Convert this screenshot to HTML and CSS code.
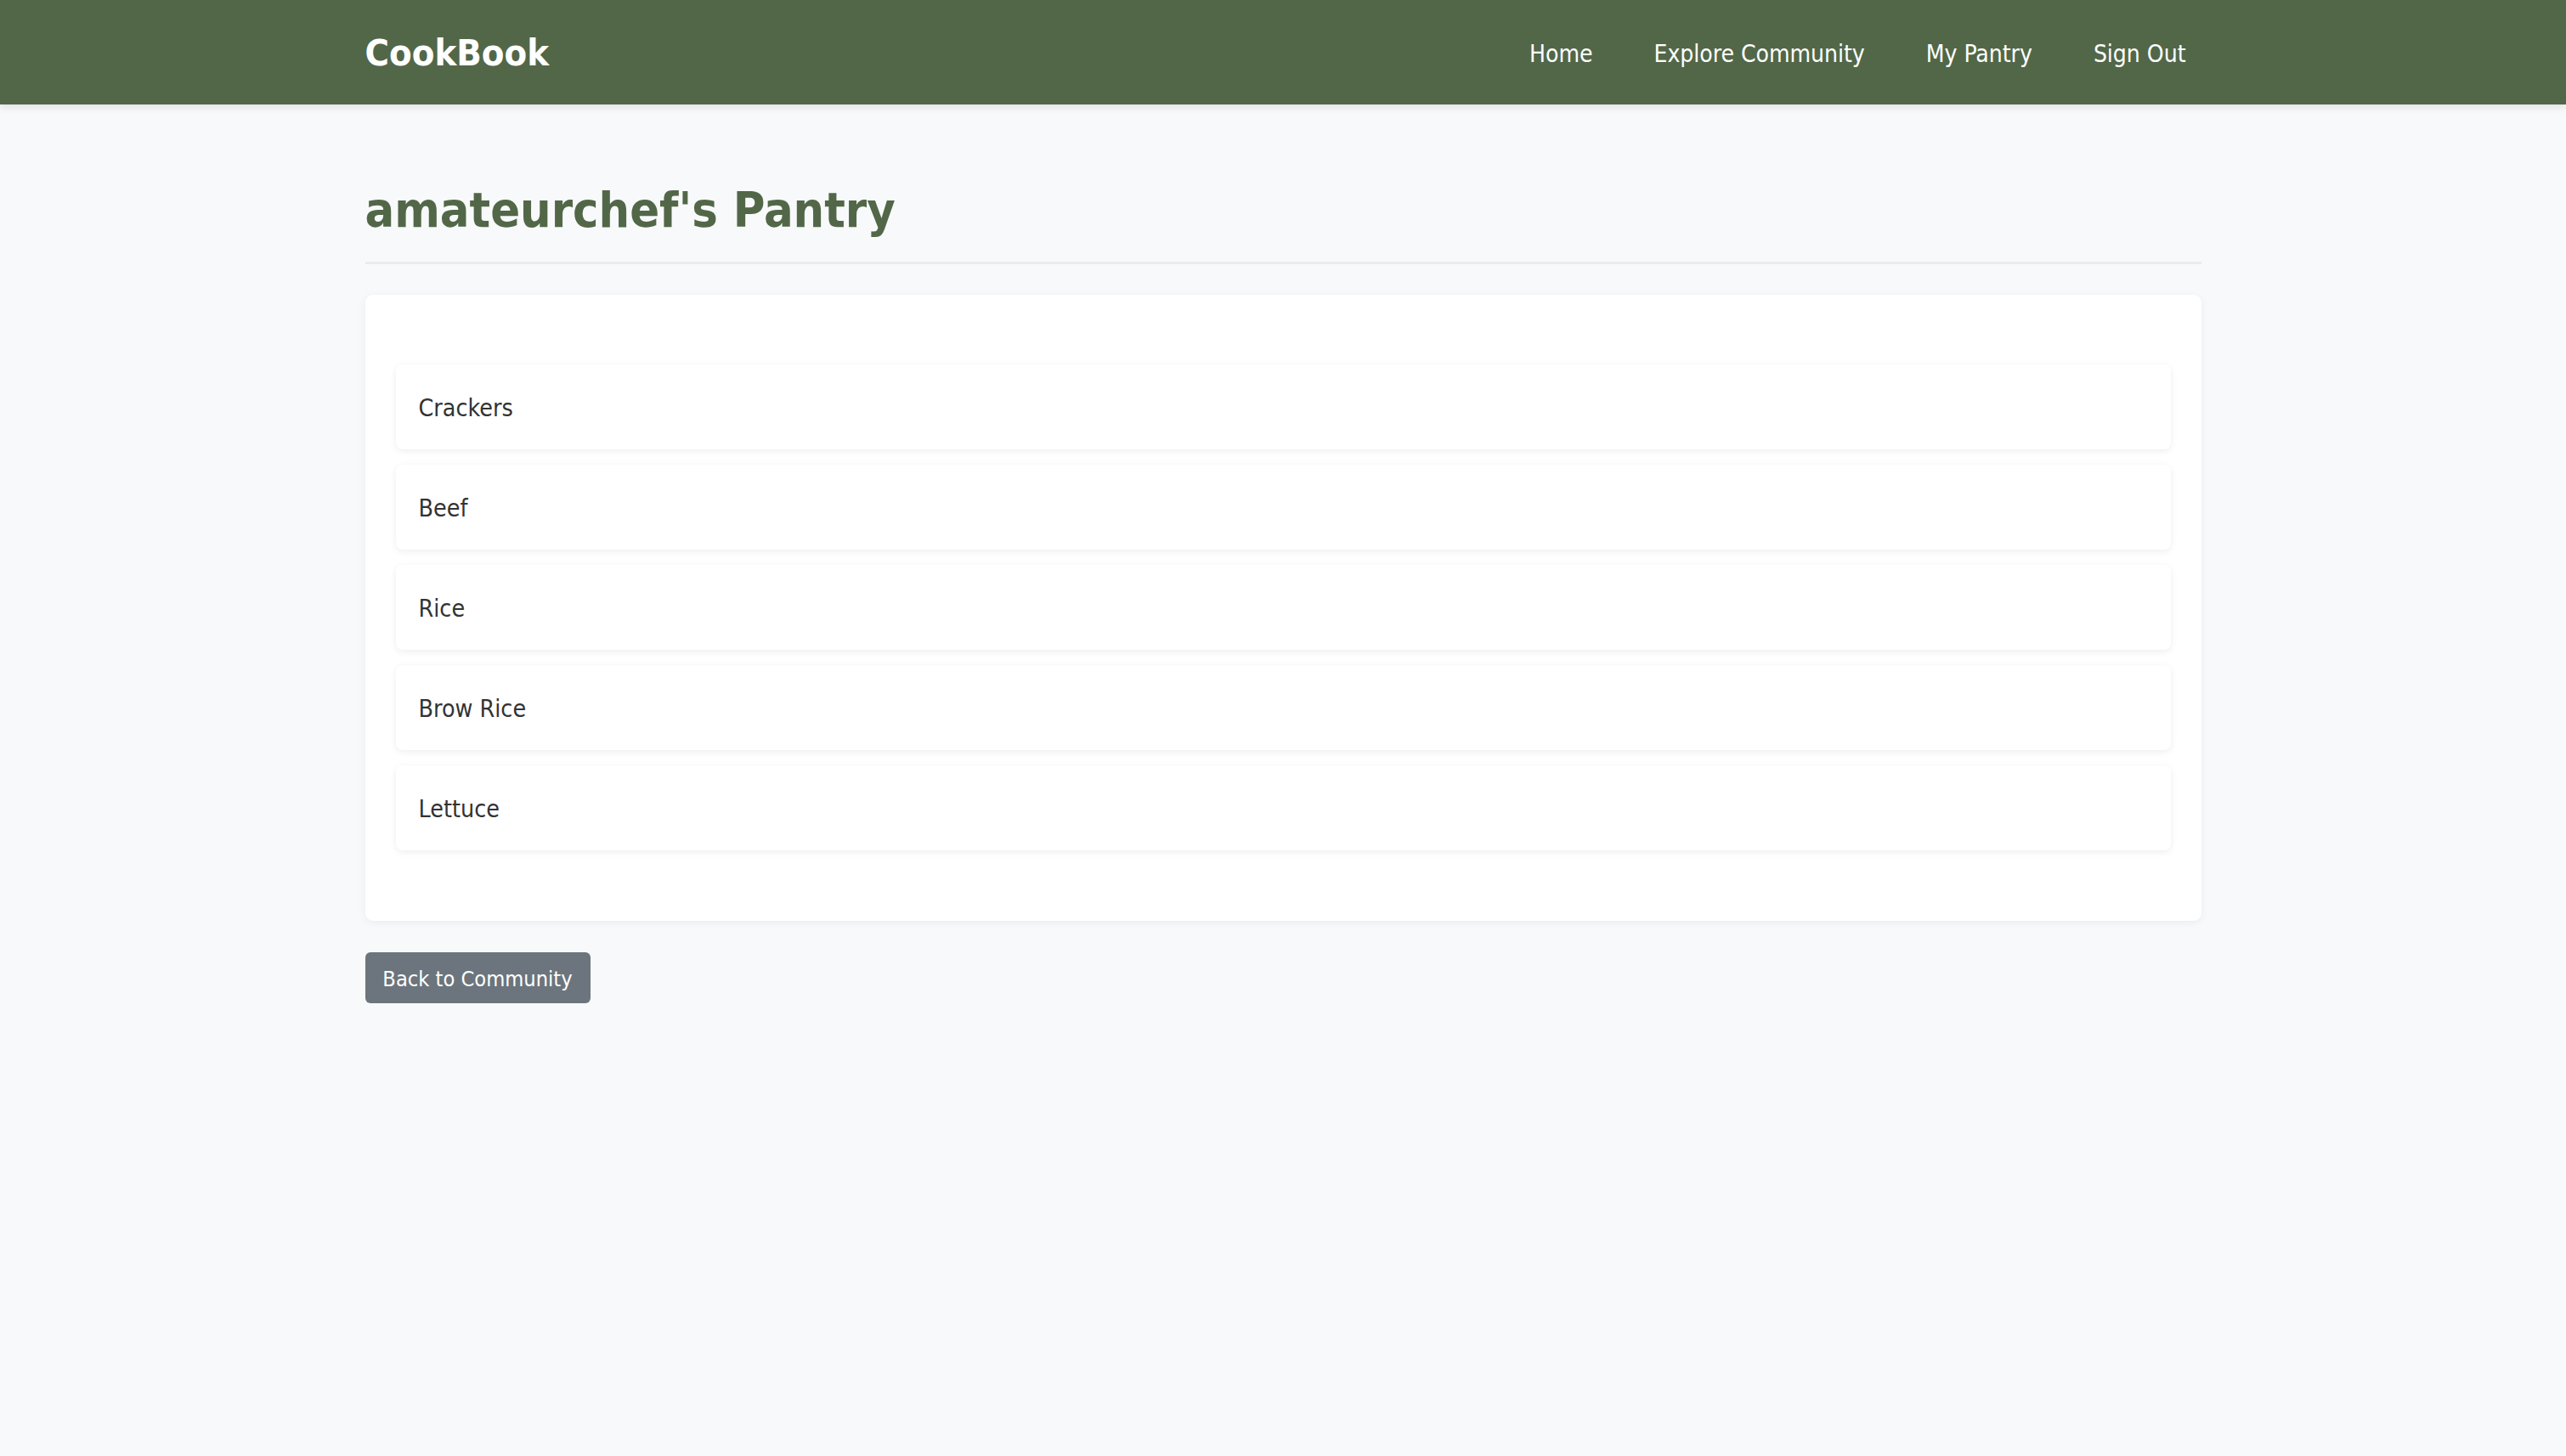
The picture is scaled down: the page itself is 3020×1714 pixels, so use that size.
FILE: index.html
```html
<!DOCTYPE html>
<html lang="en">
<head>
<meta charset="utf-8">
<title>CookBook - amateurchef's Pantry</title>
<link rel="stylesheet" href="styles.css">
</head>
<body>
<header class="site-header">
  <div class="container header-inner">
    <a class="brand" href="#">CookBook</a>
    <nav class="nav">
      <a class="nav-link" href="#">Home</a>
      <a class="nav-link" href="#">Explore Community</a>
      <a class="nav-link" href="#">My Pantry</a>
      <a class="nav-link" href="#">Sign Out</a>
    </nav>
  </div>
</header>
<main class="container main">
  <h1 class="page-title">amateurchef's Pantry</h1>
  <section class="card">
    <ul class="pantry-list">
      <li class="pantry-item">Crackers</li>
      <li class="pantry-item">Beef</li>
      <li class="pantry-item">Rice</li>
      <li class="pantry-item">Brow Rice</li>
      <li class="pantry-item">Lettuce</li>
    </ul>
  </section>
  <a class="btn-back" href="#">Back to Community</a>
</main>
</body>
</html>
```

FILE: styles.css
```css
* { box-sizing: border-box; }

html, body {
  margin: 0;
  padding: 0;
}

body {
  background: #f8f9fa;
  font-family: "DejaVu Sans Condensed", "DejaVu Sans", sans-serif;
  color: #333333;
  min-height: 1714px;
}

.container {
  max-width: 2161px;
  margin: 0 auto;
}

.site-header {
  background: #526748;
  height: 123px;
  box-shadow: 0 3px 10px rgba(0, 0, 0, 0.1);
}

.header-inner {
  height: 100%;
  padding-top: 3px;
  display: flex;
  align-items: center;
  justify-content: space-between;
}

.brand {
  color: #ffffff;
  text-decoration: none;
  font-weight: bold;
  font-size: 43.2px;
  line-height: 1;
}

.nav {
  display: flex;
  align-items: center;
}

.nav-link {
  color: #ffffff;
  text-decoration: none;
  font-size: 28px;
  padding: 0 18px;
  margin-left: 36px;
}

.nav-link:first-child {
  margin-left: 0;
}

.main {
  padding-top: 90px;
}

.page-title {
  margin: 0 0 36px;
  color: #526748;
  font-size: 57.2px;
  line-height: 69px;
  font-weight: bold;
  padding-bottom: 26px;
  border-bottom: 3px solid #e9ecef;
}

.card {
  background: #ffffff;
  border-radius: 9px;
  box-shadow: 0 2px 10px rgba(0, 0, 0, 0.06);
  padding: 82px 36px 83px;
}

.pantry-list {
  list-style: none;
  margin: 0;
  padding: 0;
  display: flex;
  flex-direction: column;
  gap: 18px;
}

.pantry-item {
  background: #ffffff;
  height: 100px;
  border-radius: 8px;
  box-shadow: 0 2px 8px rgba(0, 0, 0, 0.07);
  padding: 3px 27px 0;
  display: flex;
  align-items: center;
  font-size: 28.4px;
  color: #333333;
}

.btn-back {
  display: inline-flex;
  align-items: center;
  justify-content: center;
  margin-top: 37px;
  width: 265px;
  height: 60px;
  padding-top: 2px;
  background: #6c757d;
  color: #ffffff;
  text-decoration: none;
  border-radius: 6px;
  font-size: 25.2px;
}
```
